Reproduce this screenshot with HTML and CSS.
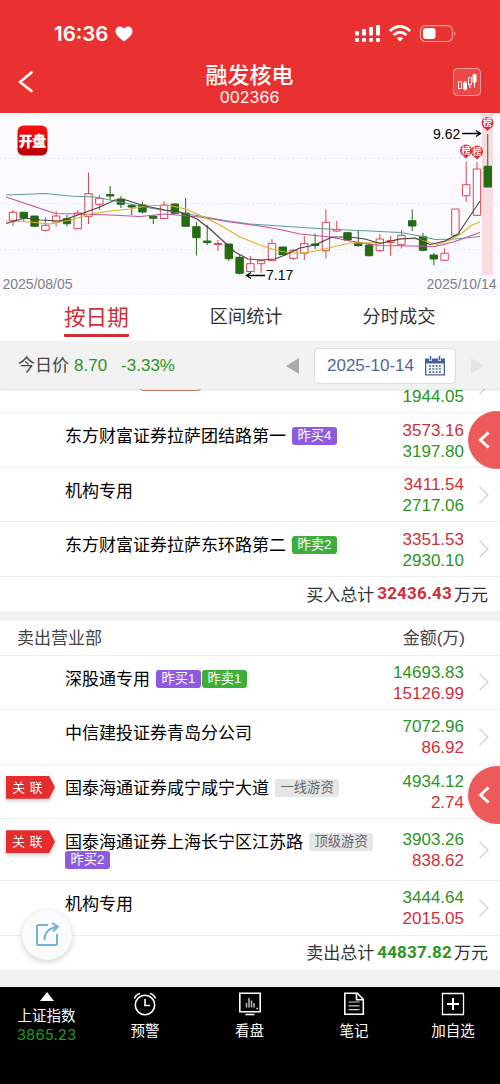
FILE: index.html
```
<!DOCTYPE html>
<html lang="zh-CN">
<head>
    <meta charset="UTF-8">
    <meta name="viewport" content="width=device-width, initial-scale=1.0">
    <title>融发核电 002366</title>
    <link rel="stylesheet" href="styles.css">
</head>
<body>

<div class="app">
    <header class="header">
        <div class="status">
            <span class="time">16:36</span>
            <svg class="heart" width="18" height="16" viewBox="0 0 18 16"><path d="M9 15.500C6 13 .5 9.500 .5 5 .5 2.300 2.500 .5 4.800 .5 6.700 .5 8.200 1.500 9 3 9.800 1.500 11.300 .5 13.200 .5c2.300 0 4.300 1.800 4.300 4.500 0 4.500-5.500 8-8.500 10.500z" fill="#fff"/></svg>
            <svg class="status-icons" width="104" height="20" viewBox="354 24 104 20">
                <g fill="#fff">
                    <rect x="355" y="31" width="4" height="4.500" rx="1"/><rect x="362" y="29" width="4" height="6.500" rx="1"/><rect x="369" y="27" width="4" height="8.500" rx="1"/><rect x="376" y="25" width="4" height="10.500" rx="1"/>
                    <rect x="355" y="38" width="4" height="4" rx="1"/><rect x="362" y="38" width="4" height="4" rx="1"/><rect x="369" y="38" width="4" height="4" rx="1"/><rect x="376" y="38" width="4" height="4" rx="1"/>
                    <path d="M400 41.500l-3.200-3.300q3.200-2.400 6.400 0z"/>
                    <rect x="423" y="28" width="12.500" height="11" rx="3"/>
                </g>
                <path d="M389.800 31q10.200-9 20.400 0M393.600 35q6.400-5.400 12.800 0" fill="none" stroke="#fff" stroke-width="2.800"/>
                <rect x="420.500" y="25.700" width="32" height="15.800" rx="5" fill="none" stroke="#f6a0a0" stroke-width="1.200"/>
                <path d="M454.300 31.500q2.500 2 0 4.500z" fill="#f6a0a0"/>
            </svg>
        </div>
        <div class="nav">
            <svg class="back" width="16" height="22" viewBox="0 0 16 22"><path d="M13.500 1.500L2 11l11.500 9" fill="none" stroke="#fff" stroke-width="2.600" stroke-linecap="round" stroke-linejoin="round"/></svg>
            <div class="title">
                <h1>融发核电</h1>
                <p>002366</p>
            </div>
            <svg class="kline" width="28" height="28" viewBox="0 0 28 28">
                <rect x=".5" y=".5" width="27" height="27" rx="3.500" fill="#ed4848" stroke="#f49a9a"/>
                <path d="M5.500 13.500h3v7h-3zM15.500 9.500h3v7h-3zM17 16.500v3.500" fill="none" stroke="#fff"/>
                <path d="M10 14.500h4v7h-4zM19.500 6.500h4v8h-4zM11.500 13h1v9.500h-1zM21 5.500h1v14h-1z" fill="#fff"/>
            </svg>
        </div>
    </header>

    <svg class="chart" width="500" height="182" viewBox="0 113 500 182">
        <defs>
            <linearGradient id="badge" x1="0" y1="0" x2="0" y2="1"><stop offset="0" stop-color="#fb1212"/><stop offset="1" stop-color="#b80000"/></linearGradient>
            <g id="pin"><path d="M-4.500 3.500L0 8l4.500-4.500z"/><circle r="6"/></g>
        </defs>
        <rect x="482" y="114" width="11" height="161" fill="#f8dce2"/>
        <path class="grid" d="M0 158.500h500M0 203.500h500M0 249.500h500M0 294.500h500"/>
        <g id="candles"></g>
        <g class="averages">
            <path stroke="#5b9e97" d="M6 195L20 194.500 45 193.500 70 196 95 197 110 200 130 204 150 208 175 212 200 216 225 220.500 250 224 280 226 310 228 337 229.500 370 231 400 232.500 420 236 435 239.500 455 239 480 236.500"/>
            <path stroke="#c9509b" d="M6 197L30 205 55 213.500 80 214 110 215 140 216.500 165 214 200 217 230 222 260 226 280 229.500 300 234 330 237 350 241 380 245.500 410 246 435 246.500 455 241.500 480 232.500"/>
            <path stroke="#dbb21c" d="M6 221L30 222 50 224 70 220 90 214 110 211 130 209 150 205.500 170 205.500 185 209 205 217.500 220 225 240 237 260 245 275 250 290 253 305 253 320 250 335 246.500 350 243 365 243 385 242.500 400 239 415 238.500 428 242 437 244.500 450 240 462 233 472 225 480 222"/>
            <path stroke="#444" d="M6 223.500L25 218 40 220 60 221 75 216 100 207 115 200 126 200 143 205.500 165 210 180 212 197 219 210 229 222 240 235 252 248 259 262 260 275 259 285 255 300 248 315 245 332 237 350 237 365 239 380 243.500 400 239 415 238 430 244.500 445 241 458 234 470 216 480 201"/>
        </g>
        <g fill="#e02f38"><use href="#pin" x="466" y="150.500"/><use href="#pin" x="477" y="151.500"/><use href="#pin" x="487.500" y="123"/></g>
        <g class="pin-text"><text x="466" y="153.500">榜</text><text x="477" y="154.500">榜</text><text x="487.500" y="126">榜</text></g>
        <path class="arrow" d="M462 133.500h18M476 130.500l4.500 3-4.500 3M265 275.500h-18M251 272.500l-4.500 3 4.500 3"/>
        <text class="extreme" x="433" y="139">9.62</text>
        <text class="extreme" x="266" y="280">7.17</text>
        <rect x="17.500" y="125.500" width="30" height="30" rx="6" fill="url(#badge)"/>
        <text class="open" x="32.500" y="146">开盘</text>
        <text class="day" x="2.500" y="289">2025/08/05</text>
        <text class="day" x="426.500" y="289">2025/10/14</text>
    </svg>

    <nav class="tabs">
        <div class="tab active">按日期</div>
        <div class="tab">区间统计</div>
        <div class="tab">分时成交</div>
    </nav>

    <div class="price-bar">
        <span>今日价</span>
        <span class="price down">8.70</span>
        <span class="change down">-3.33%</span>
        <i class="prev"></i>
        <div class="date">
            <span>2025-10-14</span>
            <svg width="20" height="20" viewBox="0 0 20 20">
                <path d="M0 2.500h20v17H0zM1.300 7.500v10.700h17.400V7.500z" fill="#47609b" fill-rule="evenodd"/>
                <path d="M5.500 0v5M14.500 0v5" stroke="#fff" stroke-width="3"/>
                <path d="M5.500 0v4.500M14.500 0v4.500" stroke="#47609b" stroke-width="1.600"/>
                <path d="M4 10h12.500M4 13h12.500M4 16h12.500" stroke="#47609b" stroke-width="1.500" stroke-dasharray="2 1.300"/>
            </svg>
        </div>
        <i class="next"></i>
    </div>

    <main class="list">
        <div class="row first">
            <div class="name"><span class="tag outline"></span></div>
            <div class="amount"><span class="down">1944.05</span></div>
            <i class="more"></i>
        </div>
        <div class="row">
            <div class="name">东方财富证券拉萨团结路第一<span class="tag buy">昨买4</span></div>
            <div class="amount"><span class="up">3573.16</span><span class="down">3197.80</span></div>
            <i class="more"></i>
        </div>
        <div class="row">
            <div class="name">机构专用</div>
            <div class="amount"><span class="up">3411.54</span><span class="down">2717.06</span></div>
            <i class="more"></i>
        </div>
        <div class="row">
            <div class="name">东方财富证券拉萨东环路第二<span class="tag sell">昨卖2</span></div>
            <div class="amount"><span class="up">3351.53</span><span class="down">2930.10</span></div>
            <i class="more"></i>
        </div>
        <div class="total">买入总计<b class="up">32436.43</b>万元</div>
        <div class="gap"></div>

        <div class="list-head"><span>卖出营业部</span><span>金额(万)</span></div>
        <div class="row">
            <div class="name">深股通专用<span class="tag buy">昨买1</span><span class="tag sell next-tag">昨卖1</span></div>
            <div class="amount"><span class="down">14693.83</span><span class="up">15126.99</span></div>
            <i class="more"></i>
        </div>
        <div class="row">
            <div class="name">中信建投证券青岛分公司</div>
            <div class="amount"><span class="down">7072.96</span><span class="up">86.92</span></div>
            <i class="more"></i>
        </div>
        <div class="row">
            <div class="related"><span>关 联</span></div>
            <div class="name">国泰海通证券咸宁咸宁大道<span class="tag trader">一线游资</span></div>
            <div class="amount"><span class="down">4934.12</span><span class="up">2.74</span></div>
            <i class="more"></i>
        </div>
        <div class="row tall">
            <div class="related"><span>关 联</span></div>
            <div class="name">国泰海通证券上海长宁区江苏路<span class="tag trader">顶级游资</span><br><span class="tag buy line-tag">昨买2</span></div>
            <div class="amount"><span class="down">3903.26</span><span class="up">838.62</span></div>
            <i class="more"></i>
        </div>
        <div class="row">
            <div class="name">机构专用</div>
            <div class="amount"><span class="down">3444.64</span><span class="up">2015.05</span></div>
            <i class="more"></i>
        </div>
        <div class="total">卖出总计<b class="down">44837.82</b>万元</div>
    </main>

    <footer class="toolbar">
        <div class="index"><i class="caret"></i><span>上证指数</span><em>3865.23</em></div>
        <div class="tool">
            <svg width="24" height="24" viewBox="0 0 24 24" fill="none" stroke="#fff" stroke-width="1.600"><circle cx="12" cy="13" r="9.700"/><path d="M12 7v6.500h5M1.500 6.500Q3 2.500 7 1.500M22.500 6.500Q21 2.500 17 1.500"/></svg>
            <span>预警</span>
        </div>
        <div class="tool">
            <svg width="24" height="24" viewBox="0 0 24 24" fill="none" stroke="#fff" stroke-width="1.600"><path d="M1.800 1.300h20.400v18.400H1.800z"/><path d="M7.500 22.500h9"/><path d="M8.500 15.500V11M11 15.500V6M13.500 15.500V8.500M16 15.500V11" stroke="#bbb" stroke-width="1.500"/><path d="M18.500 16.500h1.500"/></svg>
            <span>看盘</span>
        </div>
        <div class="tool">
            <svg width="24" height="24" viewBox="0 0 24 24" fill="none" stroke="#fff" stroke-width="1.600"><path d="M2.800 1.300h12.500l6 6v14.900H2.800z"/><path d="M14.500 1.300v6.500h6.500"/><path d="M6.500 10h11M6.500 13.800h11M6.500 17.600h11" stroke="#ccc" stroke-width="1.200"/></svg>
            <span>笔记</span>
        </div>
        <div class="tool">
            <svg width="24" height="24" viewBox="0 0 24 24" fill="none" stroke="#fff"><path d="M1.500 1.500h21v21h-21z" stroke-width="1.300"/><path d="M12 6v12M6 12h12" stroke-width="2"/></svg>
            <span>加自选</span>
        </div>
    </footer>

    <div class="drawer drawer-top"><svg width="12" height="18" viewBox="0 0 12 18"><path d="M10.500 1.500L2.500 9l8 7.500" fill="none" stroke="#fff" stroke-width="3"/></svg></div>
    <div class="drawer drawer-bottom"><svg width="12" height="18" viewBox="0 0 12 18"><path d="M10.500 1.500L2.500 9l8 7.500" fill="none" stroke="#fff" stroke-width="3"/></svg></div>
    <div class="share">
        <svg width="24" height="24" viewBox="0 0 24 24" fill="none" stroke="#72b3cf" stroke-width="2"><path d="M13 3H3.500Q2 3 2 4.500v17Q2 23 3.500 23h17q1.500 0 1.500-1.500V12"/><path d="M9.500 18Q9.500 7 22.500 4.500M17 1l6 3.500-5 5"/></svg>
    </div>
</div>

<script>
    // [up, body top, body bottom, high, low]
    const candles = [
        [1, 212.3, 220.3, 210, 226], [0, 212.3, 218, 212, 221], [0, 216, 226.3, 216, 227],
        [1, 225.3, 230.3, 217.5, 231.5], [1, 216, 222, 211, 226.5], [0, 218.7, 223.7, 215, 226.5],
        [1, 213, 228.7, 210, 229], [1, 193.7, 216.3, 172.5, 224], [1, 198.3, 204.3, 195, 210],
        [0, 194.5, 196, 186, 199.5], [0, 199, 204.3, 196, 208], [0, 205.5, 207, 205, 215],
        [0, 205, 212, 202, 213.5], [0, 216.3, 218.3, 215, 224], [1, 205, 218.5, 201, 218.5],
        [0, 204, 213.3, 203, 214], [0, 213, 226.3, 198, 226.3], [0, 226.7, 237.7, 222, 255.5],
        [0, 241, 242.5, 225, 245], [1, 243.5, 244.5, 240, 251], [0, 244, 258.7, 244, 261],
        [0, 257.3, 273.3, 255, 274.5], [1, 263.7, 271.5, 256, 272], [1, 260.7, 263.7, 260, 273],
        [1, 243.3, 260.7, 239, 261], [0, 247, 254.7, 247, 255], [1, 250.3, 258.3, 249, 260],
        [1, 243.7, 253.3, 236, 260], [0, 244, 245.5, 233.5, 249], [1, 222.3, 250.7, 209.5, 258.5],
        [1, 229.5, 231, 221, 232], [0, 232.7, 240, 232, 241], [0, 243, 245.5, 231, 247],
        [0, 245, 255.7, 243, 256.5], [1, 239, 250.7, 234, 252], [1, 240.5, 242.5, 236, 256],
        [1, 235.3, 244.7, 230, 248.5], [0, 220.7, 226, 209.5, 231], [0, 236.7, 250.3, 233, 251],
        [0, 255, 259, 253, 265], [1, 253.3, 260.3, 248.5, 261], [1, 209, 235.3, 209, 236],
        [1, 184.7, 195.7, 161.5, 202], [1, 169, 215.3, 162, 216], [0, 166.3, 187, 134, 187]
    ];
    document.getElementById('candles').innerHTML = candles.map(([up, top, bottom, high, low], i) => {
        const x = 13 + i * 10.79;
        const wick = `M${x} ${high}V${top}M${x} ${bottom}V${low}`;
        const body = `M${x - 3.7} ${top}h7.4V${bottom}h-7.4z`;
        return `<path class="${up ? 'rise' : 'fall'}" d="${wick}${body}"/>`;
    }).join('');
</script>

</body>
</html>
```
FILE: styles.css
```
* {
    box-sizing: border-box;
}
body {
    margin: 0;
    font-family: "Liberation Sans", "Noto Sans CJK SC", sans-serif;
    font-size: 17px;
    color: #000;
    background: #fff;
}
svg {
    display: block;
    flex-shrink: 0;
}
.app {
    position: relative;
    display: flex;
    flex-direction: column;
    width: 500px;
    height: 1084px;
    overflow: hidden;
}
.up {
    color: #cf3038;
}
.down {
    color: #2b9523;
}

/* header */
.header {
    height: 113px;
    flex-shrink: 0;
    background: #e93131;
    color: #fff;
}
.status {
    display: flex;
    align-items: center;
    height: 54px;
    padding: 14px 42px 0 54px;
}
.time {
    font: 600 20.5px/24px Inter, sans-serif;
    width: 61px;
}
.status-icons {
    margin-left: auto;
}
.nav {
    display: flex;
    align-items: center;
    justify-content: space-between;
    height: 56px;
    padding: 0 19px 0 18px;
}
.title {
    text-align: center;
    padding: 7px 0 0 12px;
}
.title h1 {
    margin: 0;
    font-size: 22px;
    font-weight: 500;
    line-height: 24px;
}
.title p {
    margin: -1px 0 0;
    font: 16px/20px Inter, sans-serif;
}

/* chart */
.chart {
    background: #fbfbff;
}
.grid {
    stroke: #e4e4ea;
    stroke-dasharray: 1.5 3;
}
.averages path {
    fill: none;
    stroke-width: 1.1;
    stroke-linejoin: round;
}
.rise {
    fill: none;
    stroke: #dc4450;
}
.fall {
    fill: #246b12;
    stroke: #246b12;
}
.pin-text {
    font-size: 9px;
    font-weight: 700;
    fill: #fff;
    text-anchor: middle;
}
.arrow {
    fill: none;
    stroke: #000;
    stroke-width: 1.3;
}
.extreme {
    font-size: 14px;
}
.open {
    font-size: 13.5px;
    font-weight: 900;
    fill: #fff;
    stroke: #fff;
    stroke-width: 0.3;
    text-anchor: middle;
}
.day {
    font-size: 14px;
    fill: #808085;
}

/* tabs */
.tabs {
    display: flex;
    align-items: flex-start;
    height: 46px;
    flex-shrink: 0;
    padding-left: 64px;
    background: #fff;
}
.tab {
    flex-shrink: 0;
    font-size: 18.2px;
    line-height: 45px;
    color: #333;
    margin-right: 80px;
    white-space: nowrap;
}
.tab.active {
    height: 42px;
    margin-right: 81px;
    font-size: 21.6px;
    color: #cf3038;
    border-bottom: 3px solid #cf3038;
    border-radius: 1px;
}

/* price bar */
.price-bar {
    position: relative;
    z-index: 1;
    display: flex;
    align-items: center;
    height: 48px;
    flex-shrink: 0;
    padding: 2px 16px 0 18px;
    background: #f2f2f2;
    color: #444;
    line-height: 20px;
    box-shadow: 0 1px 2px rgba(0,0,0,0.15);
}
.price {
    margin-left: 5px;
}
.change {
    margin-left: 14px;
}
.prev,
.next {
    border: solid transparent;
    border-width: 8.5px 13px;
}
.prev {
    margin-left: auto;
    border-left-width: 0;
    border-right-color: #aaa;
}
.next {
    margin-left: 15px;
    border-right-width: 0;
    border-left-color: #e4e4e4;
}
.date {
    display: flex;
    align-items: center;
    justify-content: space-between;
    width: 142px;
    height: 36px;
    margin-left: 15px;
    padding: 0 10px 0 12px;
    border: 1px solid #ddd;
    border-radius: 4px;
    background: #fff;
    color: #526798;
}

/* list */
.list {
    height: 598px;
    flex-shrink: 0;
    overflow: hidden;
    background: #f2f2f2;
}
.row {
    position: relative;
    display: flex;
    align-items: center;
    height: 54.6px;
    padding: 0 11px 0 65px;
    border-bottom: 1px solid #f0f0f0;
    background: #fff;
}
.row.first {
    margin-top: -30.3px;
}
.row.first .amount {
    padding-top: 22px;
}
.row.tall {
    height: 61.6px;
}
.name {
    flex: 1;
    align-self: flex-start;
    margin-top: 15px;
    line-height: 18px;
    white-space: nowrap;
}
.tag {
    display: inline-block;
    height: 18px;
    margin: -1px 0 0 6px;
    padding: 0 5.5px;
    border-radius: 3px;
    font-size: 13.3px;
    line-height: 18px;
    vertical-align: top;
    color: #fff;
}
.buy {
    background: #8f5ae0;
}
.sell {
    background: #3eae3a;
}
.next-tag {
    margin-left: 1px;
}
.line-tag {
    margin-left: 0;
}
.trader {
    background: #e6e6e6;
    color: #666;
}
.outline {
    width: 61px;
    margin-left: 75px;
    border: 1px solid #cc8866;
}
.amount {
    display: flex;
    flex-direction: column;
    text-align: right;
    line-height: 21px;
    padding-top: 1px;
}
.more {
    width: 12px;
    height: 12px;
    margin: 0 3px 0 10px;
    border: solid #c8c8c8;
    border-width: 1.5px 1.5px 0 0;
    transform: rotate(45deg);
}
.related {
    position: absolute;
    left: 6px;
    top: 11px;
    filter: drop-shadow(0 2px 2px rgba(0,0,0,0.2));
}
.related span {
    display: block;
    width: 49px;
    height: 23px;
    padding-left: 6px;
    background: #e52d2d;
    color: #fff;
    font-size: 13px;
    line-height: 23px;
    word-spacing: 1px;
    white-space: nowrap;
    clip-path: polygon(0 0, 43px 0, 100% 50%, 43px 100%, 0 100%);
}
.total {
    display: flex;
    justify-content: flex-end;
    align-items: center;
    height: 34px;
    padding: 0 12px 2px 0;
    background: #fff;
    color: #333;
}
.total b {
    margin: 0 2px 0 3px;
    font-family: Roboto, sans-serif;
    letter-spacing: 0.2px;
}
.gap {
    height: 9.5px;
}
.list-head {
    display: flex;
    justify-content: space-between;
    align-items: center;
    height: 35px;
    padding: 0 35px 3px 17px;
    border-bottom: 1px solid #f0f0f0;
    background: #fff;
    color: #444;
}

/* bottom toolbar */
.toolbar {
    display: grid;
    grid-template-columns: 93px 104px 105px 104px 94px;
    flex: 1;
    background: #000;
    color: #fff;
    font-size: 14.5px;
    line-height: 20px;
}
.index,
.tool {
    display: flex;
    flex-direction: column;
    align-items: center;
    padding-top: 5px;
}
.tool span {
    margin-top: 5px;
}
.caret {
    border: solid transparent;
    border-width: 0 7px 9px;
    border-bottom-color: #fff;
    margin-bottom: 5px;
}
.index em {
    font: 15px/18px Inter, sans-serif;
    color: #1c9b1c;
}

/* floating buttons */
.drawer {
    position: absolute;
    z-index: 2;
    right: -26px;
    width: 58px;
    height: 58px;
    padding: 20px 0 0 10px;
    border-radius: 50%;
    background: #ec5a5a;
}
.drawer-top {
    top: 411px;
}
.drawer-bottom {
    top: 766px;
}
.share {
    position: absolute;
    left: 22px;
    top: 910px;
    width: 50px;
    height: 50px;
    padding: 12px 13px;
    border-radius: 50%;
    background: #fbfbfd;
    box-shadow: 0 2px 6px rgba(0,0,0,0.18);
}
```
